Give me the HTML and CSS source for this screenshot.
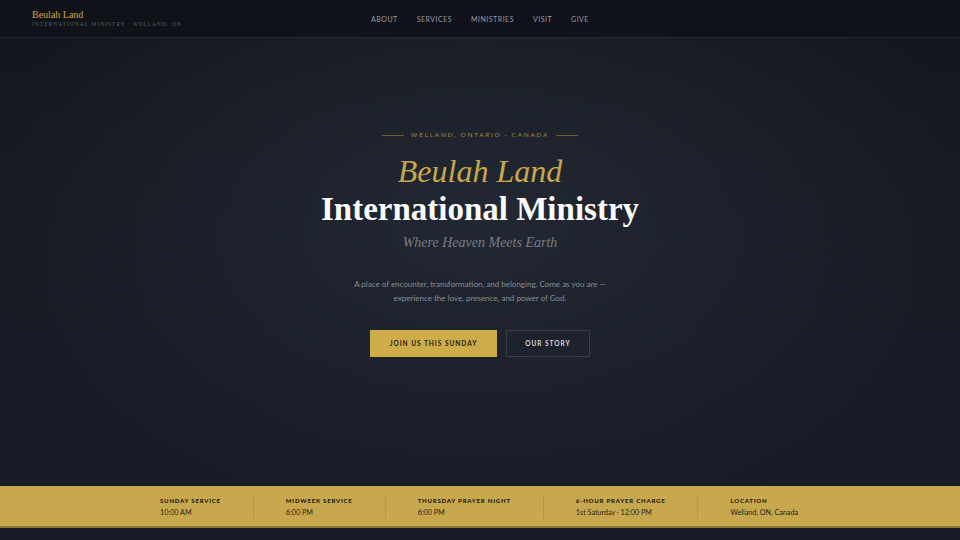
FILE: index.html
```html
<!DOCTYPE html>
<html lang="en">
<head>
    <meta charset="UTF-8">
    <meta name="viewport" content="width=device-width, initial-scale=1.0">
    <title>Beulah Land International Ministry</title>
    <link rel="stylesheet" href="styles.css">
</head>
<body>
    <header class="site-header">
        <div class="brand">
            <div class="brand-name">Beulah Land</div>
            <div class="brand-sub">International Ministry · Welland, ON</div>
        </div>
        <nav class="main-nav">
            <a href="#">About</a>
            <a href="#">Services</a>
            <a href="#">Ministries</a>
            <a href="#">Visit</a>
            <a href="#">Give</a>
        </nav>
        <div></div>
    </header>

    <section class="hero">
        <div class="eyebrow">
            <span class="rule"></span>
            <span>Welland, Ontario · Canada</span>
            <span class="rule"></span>
        </div>
        <h1 class="hero-title">
            <span class="title-gold">Beulah Land</span>
            <span class="title-white">International Ministry</span>
        </h1>
        <p class="tagline">Where Heaven Meets Earth</p>
        <p class="intro">A place of encounter, transformation, and belonging. Come as you are —<br>experience the love, presence, and power of God.</p>
        <div class="actions">
            <a href="#" class="btn btn-gold">Join us this Sunday</a>
            <a href="#" class="btn btn-outline">Our Story</a>
        </div>
    </section>

    <section class="times-bar">
        <div class="time-item">
            <div class="time-label">Sunday Service</div>
            <div class="time-value">10:00 AM</div>
        </div>
        <div class="time-item">
            <div class="time-label">Midweek Service</div>
            <div class="time-value">6:00 PM</div>
        </div>
        <div class="time-item">
            <div class="time-label">Thursday Prayer Night</div>
            <div class="time-value">6:00 PM</div>
        </div>
        <div class="time-item">
            <div class="time-label">6-Hour Prayer Charge</div>
            <div class="time-value">1st Saturday · 12:00 PM</div>
        </div>
        <div class="time-item">
            <div class="time-label">Location</div>
            <div class="time-value">Welland, ON, Canada</div>
        </div>
    </section>
</body>
</html>
```

FILE: styles.css
```css
* {
    box-sizing: border-box;
}

body {
    margin: 0;
    height: 540px;
    overflow: hidden;
    background-color: #151a25;
    font-family: Lato, "Open Sans", sans-serif;
    color: #fff;
}

a {
    text-decoration: none;
}

/* Header */
.site-header {
    height: 38px;
    background-color: #0f1218;
    border-bottom: 1px solid #262a31;
    display: grid;
    grid-template-columns: 1fr auto 1fr;
    align-items: center;
    padding: 0 32px;
}

.brand {
    padding-top: 1px;
}

.brand-name {
    font-family: "Liberation Serif", serif;
    font-size: 10px;
    color: #c8a84e;
    line-height: 11px;
}

.brand-sub {
    font-family: "Liberation Serif", serif;
    font-size: 5.6px;
    letter-spacing: 0.95px;
    text-transform: uppercase;
    color: #5a5e66;
    line-height: 9px;
}

.main-nav {
    display: flex;
    gap: 19px;
}

.main-nav a {
    font-size: 7px;
    letter-spacing: 0.5px;
    text-transform: uppercase;
    color: #9a9ca3;
}

/* Hero */
.hero {
    height: 448px;
    padding-top: 92px;
    text-align: center;
    background:
        radial-gradient(ellipse 520px 300px at 50% 40%, rgba(46, 52, 64, 0.55), rgba(21, 26, 37, 0) 100%),
        linear-gradient(180deg, #131820 0%, #171c27 100%);
}

.eyebrow {
    display: flex;
    justify-content: center;
    align-items: center;
    gap: 7px;
    font-size: 6.5px;
    letter-spacing: 1.7px;
    text-transform: uppercase;
    color: #a08a48;
    line-height: 10px;
}

.eyebrow .rule {
    width: 22px;
    height: 1px;
    background-color: #6a5c34;
}

.hero-title {
    margin: 12px 0 0;
    font-family: "Liberation Serif", serif;
    font-weight: normal;
}

.title-gold {
    display: block;
    font-style: italic;
    font-size: 32px;
    line-height: 38px;
    color: #c8a84e;
}

.title-white {
    display: block;
    font-weight: bold;
    font-size: 33px;
    line-height: 38px;
    color: #fafafa;
}

.tagline {
    margin: 7px 0 0;
    font-family: "Liberation Serif", serif;
    font-style: italic;
    font-size: 14px;
    color: #7b7e86;
}

.intro {
    margin: 26px 0 0;
    font-size: 8px;
    line-height: 14px;
    color: #8a8d95;
}

.actions {
    display: flex;
    justify-content: center;
    gap: 9px;
    margin-top: 25px;
}

.btn {
    display: flex;
    align-items: center;
    justify-content: center;
    height: 27px;
    font-size: 6.5px;
    font-weight: bold;
    letter-spacing: 1px;
    text-transform: uppercase;
}

.btn-gold {
    width: 127px;
    background-color: #cfac4a;
    color: #1d1a12;
}

.btn-outline {
    width: 84px;
    border: 1px solid #3a3f4a;
    color: #d6d7da;
}

/* Service times */
.times-bar {
    height: 42px;
    background-color: #c8a84e;
    border-bottom: 2px solid #8c7432;
    display: flex;
    align-items: center;
    padding: 3px 0 0 160px;
}

.time-item {
    padding-right: 32px;
    margin-right: 32px;
    border-right: 1px solid #b8983f;
}

.time-item:last-child {
    border-right: none;
}

.time-label {
    font-size: 6px;
    font-weight: 900;
    letter-spacing: 0.8px;
    text-transform: uppercase;
    color: #1e1a10;
    line-height: 10px;
}

.time-value {
    font-size: 7.2px;
    color: #2a2414;
    line-height: 13px;
}
```
